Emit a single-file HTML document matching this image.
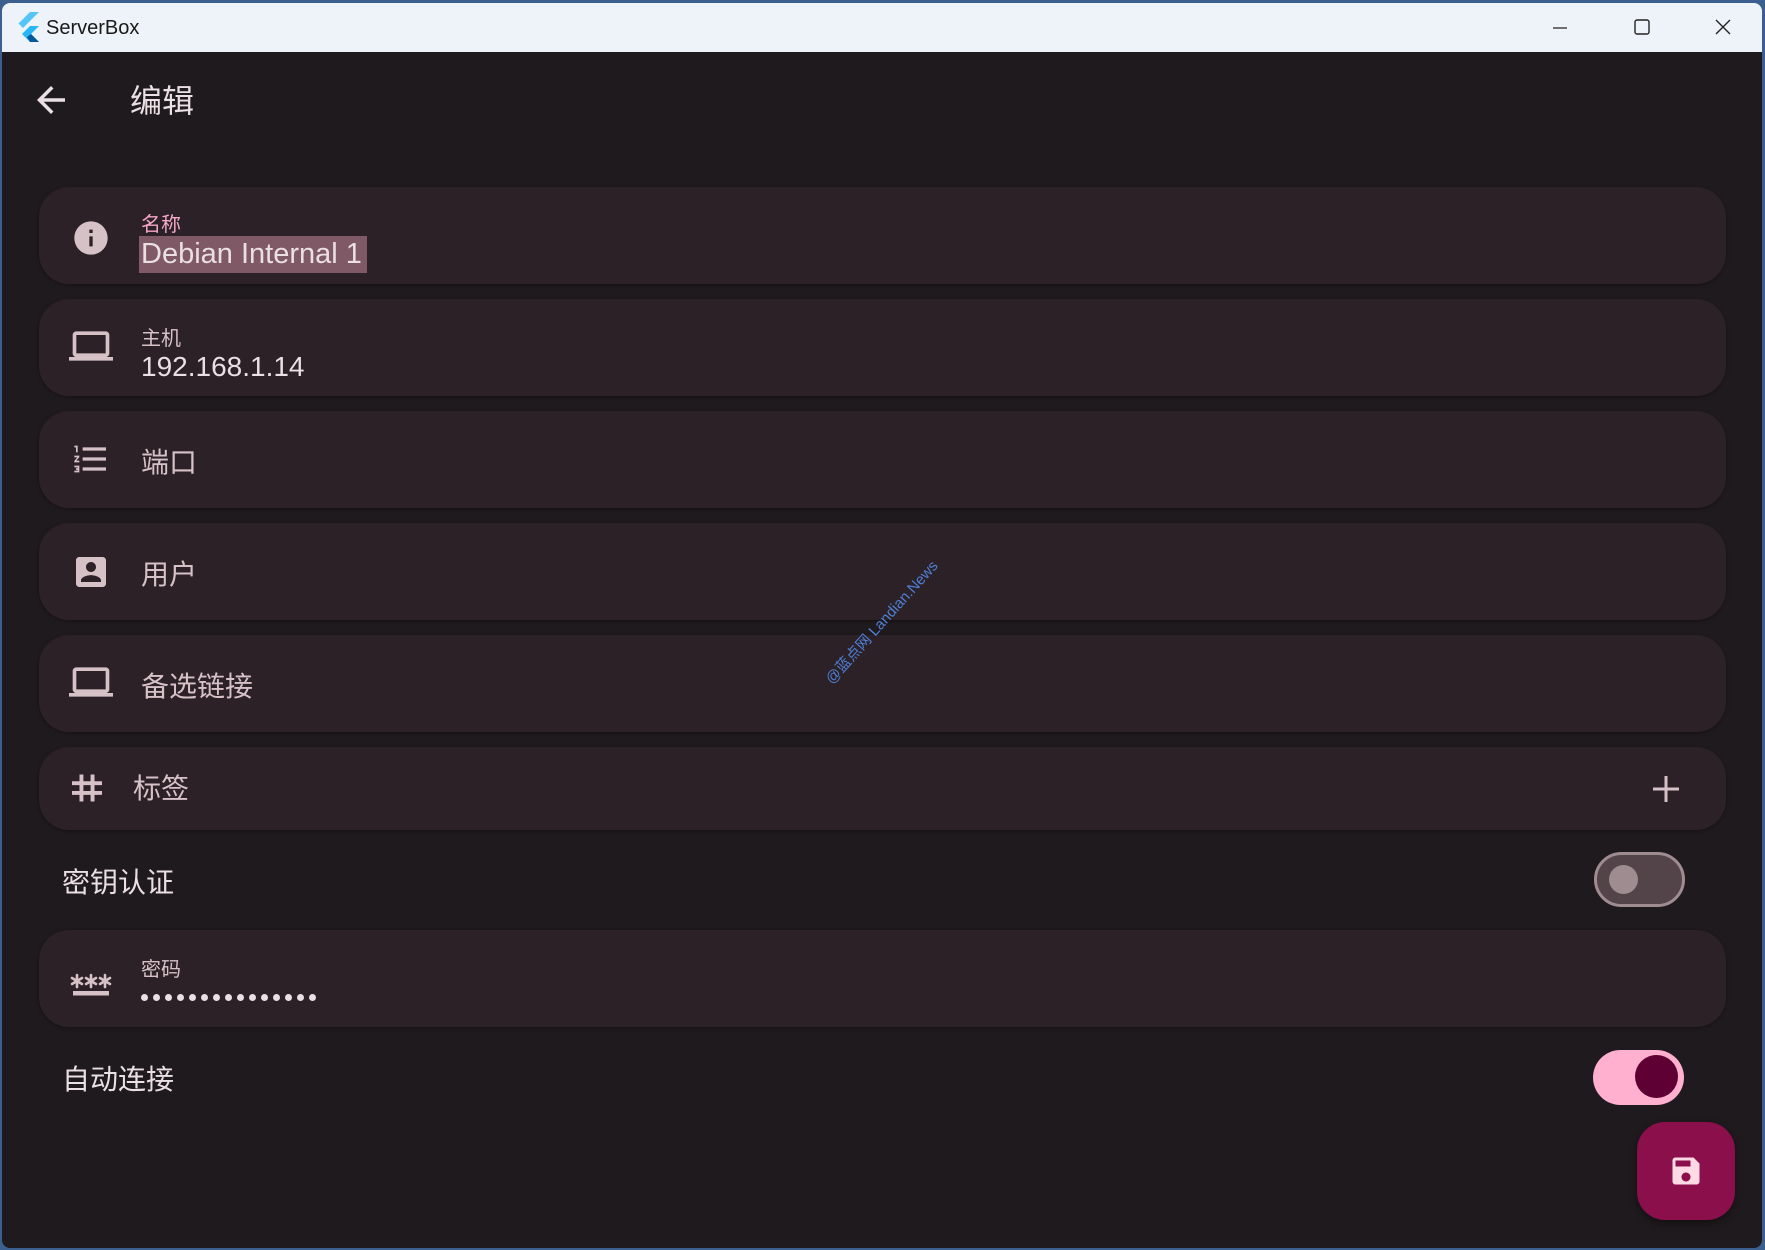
<!DOCTYPE html>
<html><head><meta charset="utf-8">
<style>
*{margin:0;padding:0;box-sizing:border-box}
html,body{width:1765px;height:1250px;overflow:hidden;background:#3b5f8f}
body{position:relative;font-family:"Liberation Sans","Noto Sans CJK SC",sans-serif;line-height:1}
.win{position:absolute;left:2px;top:3px;width:1760px;height:1245px;background:#1f1a1d;border-radius:8px;overflow:hidden}
.tb{position:absolute;left:0;top:0;width:100%;height:49px;background:#eef3f9}
.tb .t{position:absolute;left:44px;top:15px;font-size:20px;color:#1a1a1a}
.row{position:absolute;left:37px;width:1687px;background:#2b2126;border-radius:30px;box-shadow:0 1px 3px rgba(0,0,0,.35)}
.ic{position:absolute;left:32px}
.lab{position:absolute;left:102px;font-size:20px;color:#d6c1c7;line-height:1}
.val{position:absolute;left:102px;font-size:29px;color:#eadfe3;line-height:1}
.ph{position:absolute;left:102px;font-size:28px;color:#d6c1c7;line-height:1}
.big{position:absolute;font-size:28px;color:#eadfe3;line-height:1}
.dot{position:absolute;top:0;width:7px;height:7px;border-radius:50%;background:#eadfe3}
</style></head><body>
<div class="win">
 <div class="tb">
  <svg style="position:absolute;left:14px;top:9px" width="26" height="30" viewBox="0 0 26 30"><path d="M14 0h9L7 16 2.5 11.5z" fill="#54c5f8"/><path d="M14 14h9l-8 8 8 8h-9l-8-8z" fill="#29b6f6"/><path d="M11 25l4-3 8 8h-9z" fill="#01579b"/></svg>
  <div class="t">ServerBox</div>
  <svg style="position:absolute;left:1550px;top:16px" width="16" height="16"><path d="M1 9h14" stroke="#222" stroke-width="1.3"/></svg>
  <svg style="position:absolute;left:1631px;top:15px" width="18" height="18"><rect x="2" y="2" width="14" height="14" rx="2" fill="none" stroke="#222" stroke-width="1.4"/></svg>
  <svg style="position:absolute;left:1712px;top:15px" width="18" height="18"><path d="M2 2l14 14M16 2L2 16" stroke="#222" stroke-width="1.4"/></svg>
 </div>
 <svg style="position:absolute;left:28px;top:76px" width="42" height="42" viewBox="0 0 24 24"><path d="M20 11H7.83l5.59-5.59L12 4l-8 8 8 8 1.41-1.41L7.83 13H20v-2z" fill="#eadfe3"/></svg>
 <div style="position:absolute;left:128px;top:82px;font-size:32px;line-height:1;color:#eadfe3">编辑</div>

 <div class="row" style="top:184px;height:97px">
  <svg class="ic" style="top:31px" width="40" height="40" viewBox="0 0 24 24"><path d="M12 2C6.48 2 2 6.48 2 12s4.48 10 10 10 10-4.48 10-10S17.52 2 12 2zm1 15h-2v-6h2v6zm0-8h-2V7h2v2z" fill="#d6c1c7"/></svg>
  <div class="lab" style="top:28px;color:#f5a7c7">名称</div>
  <div style="position:absolute;left:100px;top:49px;width:228px;height:37px;background:#7f5966"></div>
  <div class="val" style="top:53px">Debian Internal 1</div>
 </div>
 <div class="row" style="top:296px;height:97px">
  <svg class="ic" style="top:25px;left:30px" width="44" height="44" viewBox="0 0 24 24"><path d="M20 18c1.1 0 1.99-.9 1.99-2L22 6c0-1.1-.9-2-2-2H4c-1.1 0-2 .9-2 2v10c0 1.1.9 2 2 2H0v2h24v-2h-4zM4 6h16v10H4V6z" fill="#d6c1c7"/></svg>
  <div class="lab" style="top:30px">主机</div>
  <div class="val" style="top:54px;font-size:28px">192.168.1.14</div>
 </div>
 <div class="row" style="top:408px;height:97px">
  <svg class="ic" style="top:28px" width="40" height="40" viewBox="0 0 24 24"><path d="M2 17h2v.5H3v1h1v.5H2v1h3v-4H2v1zm1-9h1V4H2v1h1v3zm-1 3h1.8L2 13.1v.9h3v-1H3.2L5 10.9V10H2v1zm5-6v2h14V5H7zm0 14h14v-2H7v2zm0-6h14v-2H7v2z" fill="#d6c1c7"/></svg>
  <div class="ph" style="top:38px">端口</div>
 </div>
 <div class="row" style="top:520px;height:97px">
  <svg class="ic" style="top:29px" width="40" height="40" viewBox="0 0 24 24"><path d="M3 5v14c0 1.1.89 2 2 2h14c1.1 0 2-.9 2-2V5c0-1.1-.9-2-2-2H5c-1.11 0-2 .9-2 2zm12 4c0 1.66-1.34 3-3 3s-3-1.34-3-3 1.34-3 3-3 3 1.34 3 3zm-9 8c0-2 4-3.1 6-3.1s6 1.1 6 3.1v1H6v-1z" fill="#d6c1c7"/></svg>
  <div class="ph" style="top:38px">用户</div>
 </div>
 <div class="row" style="top:632px;height:97px">
  <svg class="ic" style="top:25px;left:30px" width="44" height="44" viewBox="0 0 24 24"><path d="M20 18c1.1 0 1.99-.9 1.99-2L22 6c0-1.1-.9-2-2-2H4c-1.1 0-2 .9-2 2v10c0 1.1.9 2 2 2H0v2h24v-2h-4zM4 6h16v10H4V6z" fill="#d6c1c7"/></svg>
  <div class="ph" style="top:38px">备选链接</div>
 </div>
 <div class="row" style="top:744px;height:83px">
  <svg class="ic" style="top:23px;left:30px" width="36" height="36" viewBox="0 0 24 24"><path d="M7 3h2.6v18H7zM14.4 3H17v18h-2.6zM2 7.5h20v2.6H2zM2 14h20v2.6H2z" fill="#d6c1c7"/></svg>
  <div class="ph" style="top:28px;left:94px">标签</div>
  <svg style="position:absolute;left:1613px;top:28px" width="28" height="28"><path d="M14 1v26M1 14h26" stroke="#d6c1c7" stroke-width="3"/></svg>
 </div>
 <div class="big" style="left:60px;top:866px">密钥认证</div>
 <div style="position:absolute;left:1592px;top:849px;width:91px;height:55px;border-radius:28px;background:#524448;border:3px solid #9f8c90"></div>
 <div style="position:absolute;left:1607px;top:862px;width:29px;height:29px;border-radius:50%;background:#9f8c90"></div>

 <div class="row" style="top:927px;height:97px">
  <svg class="ic" style="top:43px;left:31px" width="42" height="26" viewBox="0 0 42 26"><g stroke="#d6c1c7" stroke-width="2.6" stroke-linecap="round"><path d="M7 2v12M2 5l10 6M12 5L2 11"/><path d="M21 2v12M16 5l10 6M26 5l-10 6"/><path d="M35 2v12M30 5l10 6M40 5l-10 6"/></g><rect x="3" y="18" width="36" height="4.5" fill="#d6c1c7"/></svg>
  <div class="lab" style="top:30px">密码</div>
  <div style="position:absolute;left:102px;top:64px">
   <div class="dot" style="left:0"></div><div class="dot" style="left:12px"></div><div class="dot" style="left:24px"></div><div class="dot" style="left:36px"></div><div class="dot" style="left:48px"></div><div class="dot" style="left:60px"></div><div class="dot" style="left:72px"></div><div class="dot" style="left:84px"></div><div class="dot" style="left:96px"></div><div class="dot" style="left:108px"></div><div class="dot" style="left:120px"></div><div class="dot" style="left:132px"></div><div class="dot" style="left:144px"></div><div class="dot" style="left:156px"></div><div class="dot" style="left:168px"></div>
  </div>
 </div>
 <div class="big" style="left:60px;top:1063px">自动连接</div>
 <div style="position:absolute;left:1591px;top:1047px;width:91px;height:55px;border-radius:28px;background:#ffb0cf"></div>
 <div style="position:absolute;left:1633px;top:1052px;width:43px;height:43px;border-radius:50%;background:#5f0035"></div>

 <div style="position:absolute;left:1635px;top:1119px;width:98px;height:98px;border-radius:28px;background:#8a0f4b;box-shadow:0 3px 8px rgba(0,0,0,.4)"></div>
 <svg style="position:absolute;left:1666px;top:1150px" width="36" height="36" viewBox="0 0 24 24"><path d="M17 3H5c-1.11 0-2 .9-2 2v14c0 1.1.89 2 2 2h14c1.1 0 2-.9 2-2V7l-4-4zm-5 16c-1.66 0-3-1.34-3-3s1.34-3 3-3 3 1.34 3 3-1.34 3-3 3zm3-10H5V5h10v4z" fill="#ffd9e4"/></svg>

 <div style="position:absolute;left:795px;top:612px;width:170px;text-align:center;font-size:15px;color:#4f7fd6;transform:rotate(-48deg);white-space:nowrap">@蓝点网 Landian.News</div>
</div>
</body></html>
